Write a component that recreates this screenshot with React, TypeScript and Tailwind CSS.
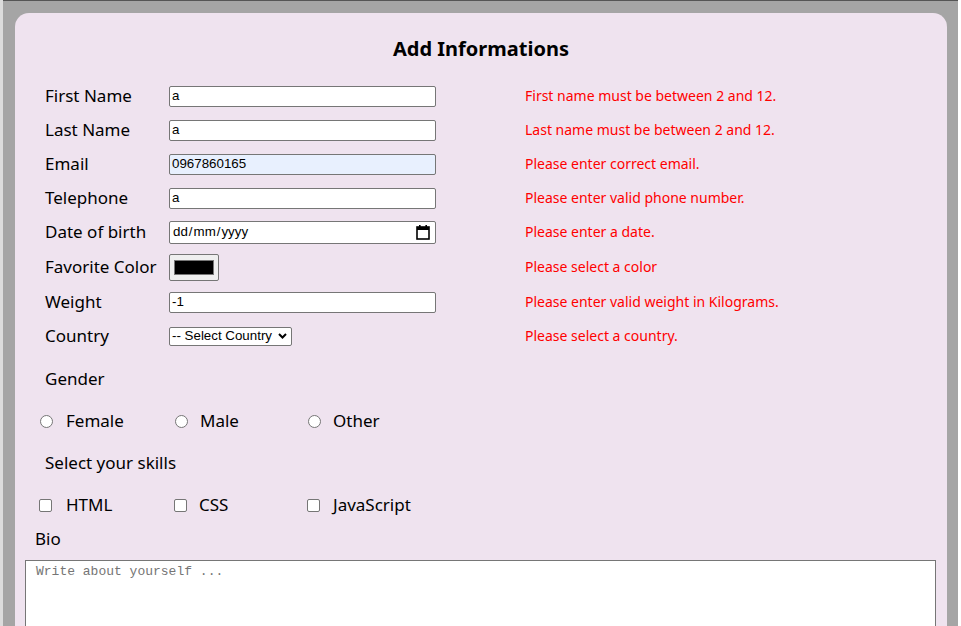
import React from "react";

const labelCls = "text-[17px] text-black";
const errCls = "text-[14px] text-[#ff0000]";
const inputCls =
  "h-[21px] w-[267px] border border-[#767676] rounded-[2px] bg-white px-[2px] flex items-center text-[13.33px] text-black font-['Liberation_Sans',Arial,sans-serif]";

function Row({ label, h, children, err }: { label: string; h: string; children: React.ReactNode; err: string }) {
  return (
    <div className={`flex items-center ${h}`}>
      <div className={`w-[124px] ${labelCls}`}>{label}</div>
      <div className="w-[356px] flex items-center">{children}</div>
      <div className={`${errCls} -mt-[1px]`}>{err}</div>
    </div>
  );
}

function Radio() {
  return <span className="inline-block w-[13px] h-[13px] rounded-full border border-[#767676] bg-white" />;
}
function Check() {
  return <span className="inline-block w-[13px] h-[13px] rounded-[2px] border border-[#767676] bg-white" />;
}

export default function App() {
  return (
    <div className="w-[961px] h-[626px] overflow-hidden flex font-['Noto_Sans',sans-serif]">
      <div className="w-[3px] bg-[#dcdcdc]" />
      <div className="w-[955px] bg-[#a5a5a5] border-t border-[#555555] pt-[12px] pl-[12px]">
        <div className="w-[932px] h-[640px] bg-[#efe3ef] rounded-[14px]">
          <div className="h-[66px] pt-[22px] text-center text-[20px] font-bold text-black leading-[28px]">
            Add Informations
          </div>
          <div className="pl-[30px]">
            <Row label="First Name" h="h-[34px]" err="First name must be between 2 and 12.">
              <div className={inputCls}>a</div>
            </Row>
            <Row label="Last Name" h="h-[34px]" err="Last name must be between 2 and 12.">
              <div className={inputCls}>a</div>
            </Row>
            <Row label="Email" h="h-[34px]" err="Please enter correct email.">
              <div className={`${inputCls} !bg-[#e8f0fe]`}>0967860165</div>
            </Row>
            <Row label="Telephone" h="h-[34px]" err="Please enter valid phone number.">
              <div className={inputCls}>a</div>
            </Row>
            <Row label="Date of birth" h="h-[34px]" err="Please enter a date.">
              <div className={`${inputCls} !h-[23px] justify-between pr-[5px]`}>
                <span className="pl-[1px]">
                  dd<span className="mx-[1px]">/</span>mm<span className="mx-[1px]">/</span>yyyy
                </span>
                <svg width="14" height="15" viewBox="0 0 14 15">
                  <rect x="1" y="2" width="12" height="12" fill="none" stroke="black" strokeWidth="1.6" />
                  <rect x="1" y="2" width="12" height="3" fill="black" />
                  <rect x="3" y="0" width="1.6" height="3" fill="black" />
                  <rect x="9.4" y="0" width="1.6" height="3" fill="black" />
                </svg>
              </div>
            </Row>
            <Row label="Favorite Color" h="h-[36px]" err="Please select a color">
              <div className="w-[50px] h-[27px] bg-[#efefef] border border-[#767676] rounded-[2px] flex items-center justify-center">
                <div className="w-[40px] h-[15px] bg-black border border-[#777777]" />
              </div>
            </Row>
            <Row label="Weight" h="h-[34px]" err="Please enter valid weight in Kilograms.">
              <div className={inputCls}>-1</div>
            </Row>
            <Row label="Country" h="h-[34px]" err="Please select a country.">
              <div className="h-[19px] w-[123px] border border-[#767676] rounded-[2px] bg-white flex items-center justify-between pl-[2px] pr-[4px] text-[13.33px] text-black font-['Liberation_Sans',Arial,sans-serif]">
                <span>-- Select Country</span>
                <svg width="9" height="6" viewBox="0 0 9 6">
                  <path d="M1 1 L4.5 4.5 L8 1" fill="none" stroke="black" strokeWidth="2" />
                </svg>
              </div>
            </Row>
          </div>
          <div className="pl-[30px] h-[47px] flex items-end pb-[9px]">
            <span className={labelCls}>Gender</span>
          </div>
          <div className="pl-[25px] h-[42px] flex items-center">
            <div className="w-[135px] flex items-center gap-[13px]">
              <Radio />
              <span className={labelCls}>Female</span>
            </div>
            <div className="w-[133px] flex items-center gap-[12px]">
              <Radio />
              <span className={labelCls}>Male</span>
            </div>
            <div className="flex items-center gap-[12px]">
              <Radio />
              <span className={labelCls}>Other</span>
            </div>
          </div>
          <div className="pl-[30px] h-[42px] flex items-center">
            <span className={labelCls}>Select your skills</span>
          </div>
          <div className="pl-[24px] h-[42px] flex items-center">
            <div className="w-[135px] flex items-center gap-[14px]">
              <Check />
              <span className={labelCls}>HTML</span>
            </div>
            <div className="w-[133px] flex items-center gap-[12px]">
              <Check />
              <span className={labelCls}>CSS</span>
            </div>
            <div className="flex items-center gap-[13px]">
              <Check />
              <span className={labelCls}>JavaScript</span>
            </div>
          </div>
          <div className="pl-[20px] h-[26px] flex items-center">
            <span className={labelCls}>Bio</span>
          </div>
          <div className="pl-[10px] pt-[8px]">
            <div className="w-[911px] h-[120px] bg-white border border-[#767676] px-[10px] pt-[1px] text-[13px] text-[#757575] font-['Liberation_Mono',monospace]">
              Write about yourself ...
            </div>
          </div>
        </div>
      </div>
      <div className="w-[3px] bg-white" />
    </div>
  );
}
